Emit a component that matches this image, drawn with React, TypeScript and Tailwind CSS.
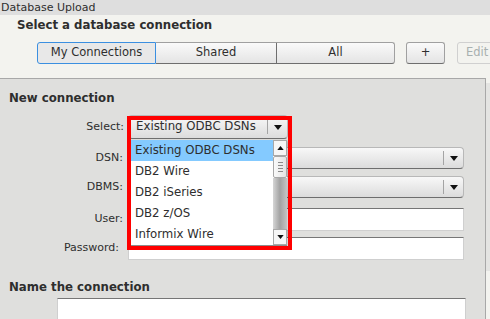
import React from "react";

function Arrow({ up = false, className = "" }: { up?: boolean; className?: string }) {
  return (
    <svg width="8" height="5" viewBox="0 0 8 5" className={className}>
      <path d={up ? "M0 5h8L4 0z" : "M0 0h8L4 5z"} fill="#111" />
    </svg>
  );
}

function SelectBox({ value, width, height }: { value: string; width: string; height: string }) {
  return (
    <div
      className={`flex ${width} ${height} items-center rounded-[4px] border border-[#b8b8b8] border-b-[#6e6e6e] bg-gradient-to-b from-[#f8f8f8] to-[#dcdcdc]`}
    >
      <span className="flex-1 whitespace-nowrap pl-[7px] text-[11.75px] leading-none text-[#2e2e2e]">{value}</span>
      <span className="h-[14px] w-px bg-[#a4a4a4]" />
      <span className="flex w-[19px] justify-center">
        <Arrow />
      </span>
    </div>
  );
}

function TextInput({ width }: { width: string }) {
  return <div className={`h-[23px] ${width} border border-[#cfcfcf] border-t-[#767676] bg-white`} />;
}

const options = ["Existing ODBC DSNs", "DB2 Wire", "DB2 iSeries", "DB2 z/OS", "Informix Wire"];

function Dropdown() {
  return (
    <div className="absolute left-[1px] top-[25px] flex h-[106px] w-[158px] border-b border-[#8c8c8c] bg-white shadow-[1px_1px_2px_rgba(0,0,0,0.25)]">
      <div className="flex-1">
        {options.map((o, i) => (
          <div
            key={o}
            className={`flex h-[21px] items-center whitespace-nowrap pl-[6px] text-[11.75px] text-[#2e2e2e] ${i === 0 ? "bg-[#84caff]" : ""}`}
          >
            {o}
          </div>
        ))}
      </div>
      {/* scrollbar */}
      <div className="flex w-[14px] flex-col">
        <div className="flex h-[16px] items-center justify-center border border-[#a8a8a8] bg-[#f6f6f6]">
          <Arrow up className="h-[4px] w-[7px]" />
        </div>
        <div className="flex h-[22px] flex-col items-center justify-center gap-[2px] rounded-[2px] border border-[#a8a8a8] bg-gradient-to-r from-[#fafafa] to-[#e4e4e4]">
          <span className="h-px w-[5px] bg-[#8a8a8a]" />
          <span className="h-px w-[5px] bg-[#8a8a8a]" />
          <span className="h-px w-[5px] bg-[#8a8a8a]" />
          <span className="h-px w-[5px] bg-[#8a8a8a]" />
        </div>
        <div className="flex-1 bg-gradient-to-r from-[#d6d6d6] via-[#a2a2a2] to-[#c4c4c4]" />
        <div className="flex h-[16px] items-center justify-center border border-[#a8a8a8] bg-[#f6f6f6]">
          <Arrow className="h-[4px] w-[7px]" />
        </div>
      </div>
    </div>
  );
}

export default function App() {
  return (
    <div className="h-[319px] w-[490px] overflow-hidden bg-[#f3f3ef] font-['DejaVu_Sans',Verdana,sans-serif] text-[#2e2e2e]">
      {/* Title bar */}
      <div className="h-[15px] bg-[#dedede] pl-px text-[11px] leading-[15px]">Database Upload</div>

      {/* Connection picker */}
      <div className="h-[60px]">
        <h1 className="mt-[3px] pl-[17px] text-[11.75px] font-bold leading-[15px]">Select a database connection</h1>
        <div className="mt-[9px] flex pl-[37px] text-[11.5px]">
          <div className="flex h-[22px] shrink-0">
            <button className="w-[119px] shrink-0 rounded-l-[3px] border border-[#3b8fe0] bg-[#e8e8e8]">My Connections</button>
            <button className="w-[120px] shrink-0 border-y border-[#a0a0a0] border-b-[#6e6e6e] bg-gradient-to-b from-[#fafafa] to-[#e4e4e4]">
              Shared
            </button>
            <button className="w-[119px] shrink-0 rounded-r-[3px] border border-[#a0a0a0] border-b-[#6e6e6e] border-l-[#6e6e6e] bg-gradient-to-b from-[#fafafa] to-[#e4e4e4]">
              All
            </button>
          </div>
          <button className="ml-[11px] h-[22px] w-[39px] shrink-0 rounded-[3px] border border-[#a0a0a0] border-b-[#6e6e6e] bg-gradient-to-b from-[#fafafa] to-[#e4e4e4]">
            +
          </button>
          <button className="ml-[12px] h-[22px] w-[50px] shrink-0 rounded-[3px] border border-[#d0d0d0] bg-[#f3f3ef] pl-[8px] text-left text-[#a8b0b0]">
            Edit
          </button>
        </div>
      </div>

      <div className="flex">
        {/* Form panel */}
        <div className="h-[244px] w-[486px] shrink-0 border-r border-t border-[#a8a8a8] bg-[#dfdfdd] text-[11px]">
          <h2 className="mt-[12px] pl-[9px] text-[11.75px] font-bold leading-[15px]">New connection</h2>

          <div className="mt-[9px] flex items-center">
            <span className="w-[124px] text-right">Select:</span>
            <div className="relative ml-[4px]">
              <SelectBox value="Existing ODBC DSNs" width="w-[160px]" height="h-[24px]" />
              <Dropdown />
              <div className="absolute left-[-1px] top-[1px] h-[134px] w-[165px] border-[4px] border-[#ff0000]" />
            </div>
          </div>

          <div className="mt-[8px] flex items-center">
            <span className="w-[123px] text-right">DSN:</span>
            <div className="ml-[5px]">
              <SelectBox value="" width="w-[336px]" height="h-[22px]" />
            </div>
          </div>

          <div className="mt-[7px] flex items-center">
            <span className="w-[123px] text-right">DBMS:</span>
            <div className="ml-[5px]">
              <SelectBox value="" width="w-[336px]" height="h-[22px]" />
            </div>
          </div>

          <div className="mt-[10px] flex items-center">
            <span className="w-[123px] text-right">User:</span>
            <div className="ml-[5px]">
              <TextInput width="w-[336px]" />
            </div>
          </div>

          <div className="mt-[6px] flex items-center">
            <span className="w-[123px] pr-[4px] text-right">Password:</span>
            <div className="ml-[5px]">
              <TextInput width="w-[336px]" />
            </div>
          </div>

          <h2 className="mt-[20px] pl-[9px] text-[11.75px] font-bold leading-[15px]">Name the connection</h2>
          <div className="mt-[3px] pl-[57px]">
            <TextInput width="w-[409px]" />
          </div>
        </div>
        <div className="flex-1">
          <div className="mt-[5px] h-[188px] bg-[#e4e4e2]" />
        </div>
      </div>
    </div>
  );
}
